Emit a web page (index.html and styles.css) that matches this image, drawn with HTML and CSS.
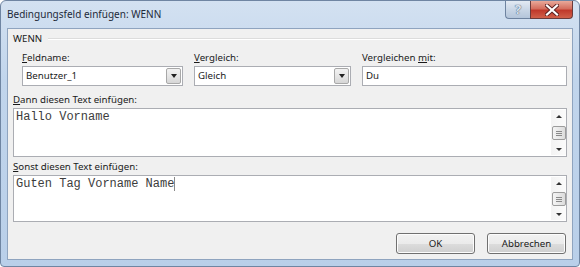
FILE: index.html
```html
<!DOCTYPE html>
<html lang="de">
<head>
  <meta charset="UTF-8">
  <title>Bedingungsfeld einfügen: WENN</title>
  <link rel="stylesheet" href="styles.css">
</head>
<body>

  <div class="fenster">
    <div class="titelleiste">
      <span class="titel">Bedingungsfeld einfügen: WENN</span>
      <div class="knoepfe">
        <div class="knopf-hilfe">?</div>
        <div class="knopf-schliessen">
          <svg width="14" height="12" viewBox="0 0 14 12">
            <path d="M2 1.5 L12 10.5 M12 1.5 L2 10.5" stroke="#5a2020" stroke-width="4" stroke-linecap="square"/>
            <path d="M2 1.5 L12 10.5 M12 1.5 L2 10.5" stroke="#ffffff" stroke-width="2.2" stroke-linecap="square"/>
          </svg>
        </div>
      </div>
    </div>

    <div class="inhalt">
      <div class="gruppe">
        <div class="gruppe-kopf">
          <span>WENN</span>
          <span class="linie"></span>
        </div>
        <div class="felder">
          <div class="feld feld-name">
            <span class="beschriftung"><u>F</u>eldname:</span>
            <div class="combo">
              <span class="wert">Benutzer_1</span>
              <span class="pfeil"><i></i></span>
            </div>
          </div>
          <div class="feld feld-vergleich">
            <span class="beschriftung"><u>V</u>ergleich:</span>
            <div class="combo">
              <span class="wert">Gleich</span>
              <span class="pfeil"><i></i></span>
            </div>
          </div>
          <div class="feld feld-mit">
            <span class="beschriftung">Vergleichen <u>m</u>it:</span>
            <div class="eingabe">Du</div>
          </div>
        </div>
      </div>

      <div class="block">
        <span class="beschriftung"><u>D</u>ann diesen Text einfügen:</span>
        <div class="textfeld">
          <div class="text">Hallo Vorname</div>
          <div class="rollbalken">
            <span class="hoch"></span>
            <span class="schieber"></span>
            <span class="runter"></span>
          </div>
        </div>
      </div>

      <div class="block block-sonst">
        <span class="beschriftung"><u>S</u>onst diesen Text einfügen:</span>
        <div class="textfeld">
          <div class="text">Guten Tag Vorname Name<span class="cursor"></span></div>
          <div class="rollbalken">
            <span class="hoch"></span>
            <span class="schieber"></span>
            <span class="runter"></span>
          </div>
        </div>
      </div>

      <div class="aktionen">
        <button class="taste">OK</button>
        <button class="taste">Abbrechen</button>
      </div>
    </div>
  </div>

</body>
</html>
```

FILE: styles.css
```css
body {
  margin: 0;
  background: #ffffff;
  font-family: "Noto Sans", "Open Sans", sans-serif;
  font-size: 9.7px;
  color: #1a1a1a;
}

.fenster {
  width: 580px;
  height: 267px;
  box-sizing: border-box;
  border: 1px solid #6f85a2;
  border-radius: 6px 6px 4px 4px;
  background: linear-gradient(to bottom, #d3e1f1 0%, #c1d5ec 30%, #b9cfe9 100%);
  padding: 0 6px 6px;
  display: flex;
  flex-direction: column;
}

.titelleiste {
  height: 27px;
  display: flex;
  justify-content: space-between;
  align-items: flex-start;
}

.titel {
  margin-top: 5px;
  font-size: 10px;
  line-height: 16px;
  color: #1e2a3a;
}

.knoepfe {
  display: flex;
}

.knopf-hilfe {
  width: 24px;
  height: 17px;
  border: 1px solid #6e83a0;
  border-top: none;
  border-right: none;
  border-radius: 0 0 0 4px;
  background: linear-gradient(to bottom, #e3eaf3 0%, #c9d6e6 50%, #b4c5da 100%);
  color: #d8e2ee;
  font-weight: bold;
  font-size: 13px;
  line-height: 17px;
  text-align: center;
  text-shadow: 0 0 1px #4d5f78, 0 0 1px #4d5f78;
}

.knopf-schliessen {
  width: 41px;
  height: 17px;
  border: 1px solid #6b3b3b;
  border-top: none;
  border-radius: 0 0 4px 0;
  background: linear-gradient(to bottom, #e9a99a 0%, #d46e5e 45%, #c0392b 55%, #d0604a 100%);
  display: flex;
  align-items: center;
  justify-content: center;
}

.inhalt {
  flex: 1;
  background: #f0f0f0;
  border: 1px solid #8fa4bf;
  padding: 3px 5px 5px 5px;
  display: flex;
  flex-direction: column;
}

.gruppe-kopf {
  display: flex;
  align-items: center;
  height: 14px;
  line-height: 14px;
}

.gruppe-kopf .linie {
  flex: 1;
  height: 1px;
  margin-left: 6px;
  margin-right: -3px;
  background: #dcdcdc;
  border-bottom: 1px solid #ffffff;
}

.felder {
  display: flex;
  gap: 11px;
  padding-left: 9px;
  margin-top: 5px;
}

.feld {
  display: flex;
  flex-direction: column;
}

.feld-name { width: 161px; }
.feld-vergleich { width: 157px; }
.feld-mit { flex: 1; }

.beschriftung {
  display: block;
  line-height: 14px;
  height: 14px;
  margin-bottom: 1px;
  white-space: nowrap;
}

.combo, .eingabe {
  height: 20px;
  box-sizing: border-box;
  border: 1px solid #abadb3;
  background: #ffffff;
  display: flex;
  align-items: center;
}

.combo .wert, .eingabe {
  padding-left: 3px;
  line-height: 18px;
}

.combo .wert {
  flex: 1;
}

.pfeil {
  width: 15px;
  height: 16px;
  margin-right: 1px;
  box-sizing: border-box;
  border: 1px solid #a8a8a8;
  border-radius: 2px;
  background: linear-gradient(to bottom, #f2f2f2 0%, #e6e6e6 50%, #d6d6d6 100%);
  display: flex;
  align-items: center;
  justify-content: center;
}

.pfeil i {
  width: 0;
  height: 0;
  border-left: 3px solid transparent;
  border-right: 3px solid transparent;
  border-top: 4px solid #222222;
}

.block {
  margin-top: 7px;
}

.block-sonst {
  margin-top: 3px;
}

.textfeld {
  height: 49px;
  box-sizing: border-box;
  border: 1px solid #abadb3;
  background: #ffffff;
  display: flex;
}

.block-sonst .textfeld {
  height: 47px;
}

.text {
  flex: 1;
  font-family: "Liberation Mono", "DejaVu Sans Mono", monospace;
  font-size: 12px;
  line-height: 14px;
  color: #3c3c3c;
  padding: 1px 2px;
}

.cursor {
  display: inline-block;
  width: 1px;
  height: 14px;
  background: #8a8a8a;
  vertical-align: top;
}

.rollbalken {
  width: 15px;
  margin: 1px 0;
  background: linear-gradient(to right, #f3f3f3, #fbfbfb);
  display: flex;
  flex-direction: column;
  align-items: center;
  justify-content: space-between;
}

.hoch, .runter {
  height: 12px;
  width: 15px;
  display: flex;
  align-items: center;
  justify-content: center;
}

.hoch::before {
  content: "";
  border-left: 3px solid transparent;
  border-right: 3px solid transparent;
  border-bottom: 3px solid #333333;
}

.runter::before {
  content: "";
  border-left: 3px solid transparent;
  border-right: 3px solid transparent;
  border-top: 3px solid #333333;
}

.schieber {
  width: 14px;
  height: 14px;
  box-sizing: border-box;
  border: 1px solid #9c9c9c;
  border-radius: 2px;
  background:
    linear-gradient(#8a8a8a, #8a8a8a) center 4px / 6px 1px no-repeat,
    linear-gradient(#8a8a8a, #8a8a8a) center 6px / 6px 1px no-repeat,
    linear-gradient(#8a8a8a, #8a8a8a) center 8px / 6px 1px no-repeat,
    linear-gradient(to right, #f4f4f4, #dcdcdc);
}

.aktionen {
  margin-top: auto;
  display: flex;
  justify-content: flex-end;
  gap: 12px;
  padding-right: 1px;
}

.taste {
  width: 79px;
  height: 21px;
  font-family: inherit;
  font-size: 9.7px;
  color: #1a1a1a;
  border: 1px solid #707070;
  border-radius: 3px;
  background: linear-gradient(to bottom, #f2f2f2 0%, #ebebeb 50%, #dddddd 51%, #cfcfcf 100%);
  box-shadow: inset 0 0 0 1px #fcfcfc;
  padding: 0;
}
```
